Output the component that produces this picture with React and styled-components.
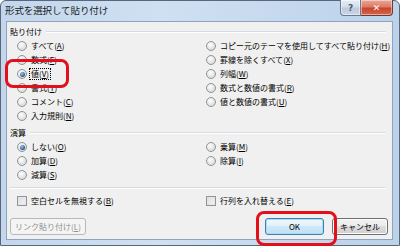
import React from "react";
import styled, { createGlobalStyle } from "styled-components";

const GlobalStyle = createGlobalStyle`
  html, body { margin: 0; padding: 0; background: #ffffff; }
  body {
    width: 400px; height: 246px; overflow: hidden;
    font-family: "Noto Sans CJK JP", "Noto Sans", sans-serif;
  }
  * { box-sizing: border-box; }
`;

const Window = styled.div`
  position: relative;
  width: 400px;
  height: 246px;
  display: flex;
  flex-direction: column;
  border: 1px solid #58677a;
  border-radius: 6px 6px 0 0;
  background: linear-gradient(90deg, #c3d6ec 0%, #cfe0f2 40%, #bcd2ea 100%);
`;

const TitleBar = styled.div`
  height: 20px;
  display: flex;
  align-items: flex-start;
  padding-left: 4px;
`;

const Title = styled.div`
  font-size: 9.5px;
  line-height: 19px;
  color: #1a1a1a;
  letter-spacing: -0.1px;
`;

const Caption = styled.div`
  margin-left: auto;
  margin-right: 6px;
  margin-top: -1px;
  display: flex;
`;

const CapBtn = styled.div`
  width: ${(p) => p.$w}px;
  height: 16px;
  display: flex;
  align-items: center;
  justify-content: center;
  font-family: "DejaVu Sans", sans-serif;
  font-size: 9px;
  font-weight: bold;
  border: 1px solid ${(p) => (p.$close ? "#6e3b33" : "#6b7a8d")};
  border-top: none;
  border-left: ${(p) => (p.$close ? "none" : undefined)};
  border-radius: ${(p) => (p.$close ? "0 0 4px 0" : "0 0 0 4px")};
  color: ${(p) => (p.$close ? "#ffffff" : "#4a5b70")};
  background: ${(p) =>
    p.$close
      ? "linear-gradient(#e9a796 0%, #dd7b66 45%, #c9462d 55%, #d3664d 100%)"
      : "linear-gradient(#e8eef6 0%, #d4deea 45%, #bccbdd 55%, #c9d6e6 100%)"};
  box-shadow: inset 0 0 0 1px rgba(255, 255, 255, 0.45);
`;

const Client = styled.div`
  flex: 1;
  margin: 0 6px 5px 5px;
  background: #f0f0f0;
  border: 1px solid #8fa3bc;
  display: flex;
  flex-direction: column;
  font-size: 8px;
  color: #000;
`;

const GroupHeader = styled.div`
  height: 14px;
  margin-top: 3px;
  display: flex;
  align-items: center;
  padding-left: 3px;
  gap: 4px;
  line-height: 14px;
`;

const HeaderLine = styled.div`
  flex: 1;
  margin-right: 6px;
  border-top: 1px solid #d5dce3;
  border-bottom: 1px solid #ffffff;
`;

const Columns = styled.div`
  display: grid;
  grid-template-columns: 189px 1fr;
  padding-left: 10px;
`;

const Column = styled.div`
  display: flex;
  flex-direction: column;
`;

const Option = styled.div`
  height: 14px;
  display: flex;
  align-items: center;
  gap: 3px;
  white-space: nowrap;
`;

const Radio = styled.span`
  width: 10px;
  height: 10px;
  border-radius: 50%;
  flex: none;
  border: 1px solid #8f9598;
  background: radial-gradient(circle at 40% 35%, #ffffff 0%, #e9e9e9 45%, #cfcfcf 100%);
  display: flex;
  align-items: center;
  justify-content: center;
  &::after {
    content: "";
    display: ${(p) => (p.$on ? "block" : "none")};
    width: 5px;
    height: 5px;
    border-radius: 50%;
    background: radial-gradient(circle at 40% 35%, #a8c8e8 0%, #3b6c9c 55%, #1d3e62 100%);
  }
`;

const Check = styled.span`
  width: 10px;
  height: 10px;
  flex: none;
  border: 1px solid #8f9598;
  background: linear-gradient(135deg, #dcdcdc 0%, #f5f5f5 100%);
  box-shadow: inset 0 0 0 1px #e4e4e4;
`;

const Label = styled.span`
  line-height: 10px;
  padding: 0 1px;
  outline: ${(p) => (p.$focus ? "1px dotted #000" : "none")};
  outline-offset: 0;
`;

const Separator = styled.div`
  margin: 5px 6px 0 3px;
  border-top: 1px solid #d5dce3;
  border-bottom: 1px solid #ffffff;
`;

const CheckRow = styled.div`
  margin-top: 5px;
  display: grid;
  grid-template-columns: 189px 1fr;
  padding-left: 10px;
`;

const ButtonRow = styled.div`
  margin-top: 10px;
  display: flex;
  align-items: center;
  padding: 0 4px 0 3px;
`;

const Button = styled.div`
  width: ${(p) => p.$w}px;
  height: 17px;
  margin-left: ${(p) => p.$ml || 0}px;
  display: flex;
  align-items: center;
  justify-content: center;
  font-size: 8px;
  border-radius: 3px;
  border: 1px solid ${(p) => (p.$disabled ? "#b5b9bc" : p.$default ? "#3c7fb1" : "#707070")};
  color: ${(p) => (p.$disabled ? "#8f8f8f" : "#000")};
  background: ${(p) =>
    p.$disabled
      ? "#f4f4f4"
      : p.$default
      ? "linear-gradient(#eef7fd 0%, #e2f1fb 50%, #cfe8f8 50%, #c1e0f4 100%)"
      : "linear-gradient(#f2f2f2 0%, #ebebeb 50%, #dddddd 50%, #cfcfcf 100%)"};
  box-shadow: ${(p) =>
    p.$default ? "inset 0 0 0 1px #a6defa" : p.$disabled ? "none" : "inset 0 0 0 1px #fcfcfc"};
`;

const Spacer = styled.div`
  flex: 1;
`;

const Annotation = styled.div`
  position: absolute;
  left: ${(p) => p.$x}px;
  top: ${(p) => p.$y}px;
  width: ${(p) => p.$w}px;
  height: ${(p) => p.$h}px;
  border: 3px solid #e3101c;
  border-radius: 8px;
  pointer-events: none;
`;

const Mn = ({ k }) => (
  <>
    (<u>{k}</u>)
  </>
);

const pasteLeft = [
  ["すべて", "A"],
  ["数式", "F"],
  ["値", "V", true],
  ["書式", "T"],
  ["コメント", "C"],
  ["入力規則", "N"],
];
const pasteRight = [
  ["コピー元のテーマを使用してすべて貼り付け", "H"],
  ["罫線を除くすべて", "X"],
  ["列幅", "W"],
  ["数式と数値の書式", "R"],
  ["値と数値の書式", "U"],
];
const opLeft = [
  ["しない", "O", true],
  ["加算", "D"],
  ["減算", "S"],
];
const opRight = [
  ["乗算", "M"],
  ["除算", "I"],
];

const RadioList = ({ items, focusFirstChecked }) => (
  <Column>
    {items.map(([t, k, on]) => (
      <Option key={k}>
        <Radio $on={on} />
        <Label $focus={on && focusFirstChecked}>
          {t}
          <Mn k={k} />
        </Label>
      </Option>
    ))}
  </Column>
);

export default function App() {
  return (
    <>
      <GlobalStyle />
      <Window>
        <TitleBar>
          <Title>形式を選択して貼り付け</Title>
          <Caption>
            <CapBtn $w={21}>?</CapBtn>
            <CapBtn $w={32} $close>
              ✕
            </CapBtn>
          </Caption>
        </TitleBar>
        <Client>
          <GroupHeader>
            <span>貼り付け</span>
            <HeaderLine />
          </GroupHeader>
          <Columns>
            <RadioList items={pasteLeft} focusFirstChecked />
            <RadioList items={pasteRight} />
          </Columns>
          <GroupHeader>
            <span>演算</span>
            <HeaderLine />
          </GroupHeader>
          <Columns>
            <RadioList items={opLeft} />
            <RadioList items={opRight} />
          </Columns>
          <Separator />
          <CheckRow>
            <Option>
              <Check />
              <Label>
                空白セルを無視する
                <Mn k="B" />
              </Label>
            </Option>
            <Option>
              <Check />
              <Label>
                行列を入れ替える
                <Mn k="E" />
              </Label>
            </Option>
          </CheckRow>
          <ButtonRow>
            <Button $w={76} $disabled>
              リンク貼り付け(<u>L</u>)
            </Button>
            <Spacer />
            <Button $w={59} $default>
              OK
            </Button>
            <Button $w={56} $ml={8}>
              キャンセル
            </Button>
          </ButtonRow>
        </Client>
        <Annotation $x={4} $y={58} $w={64} $h={29} />
        <Annotation $x={255} $y={210} $w={81} $h={35} />
      </Window>
    </>
  );
}
